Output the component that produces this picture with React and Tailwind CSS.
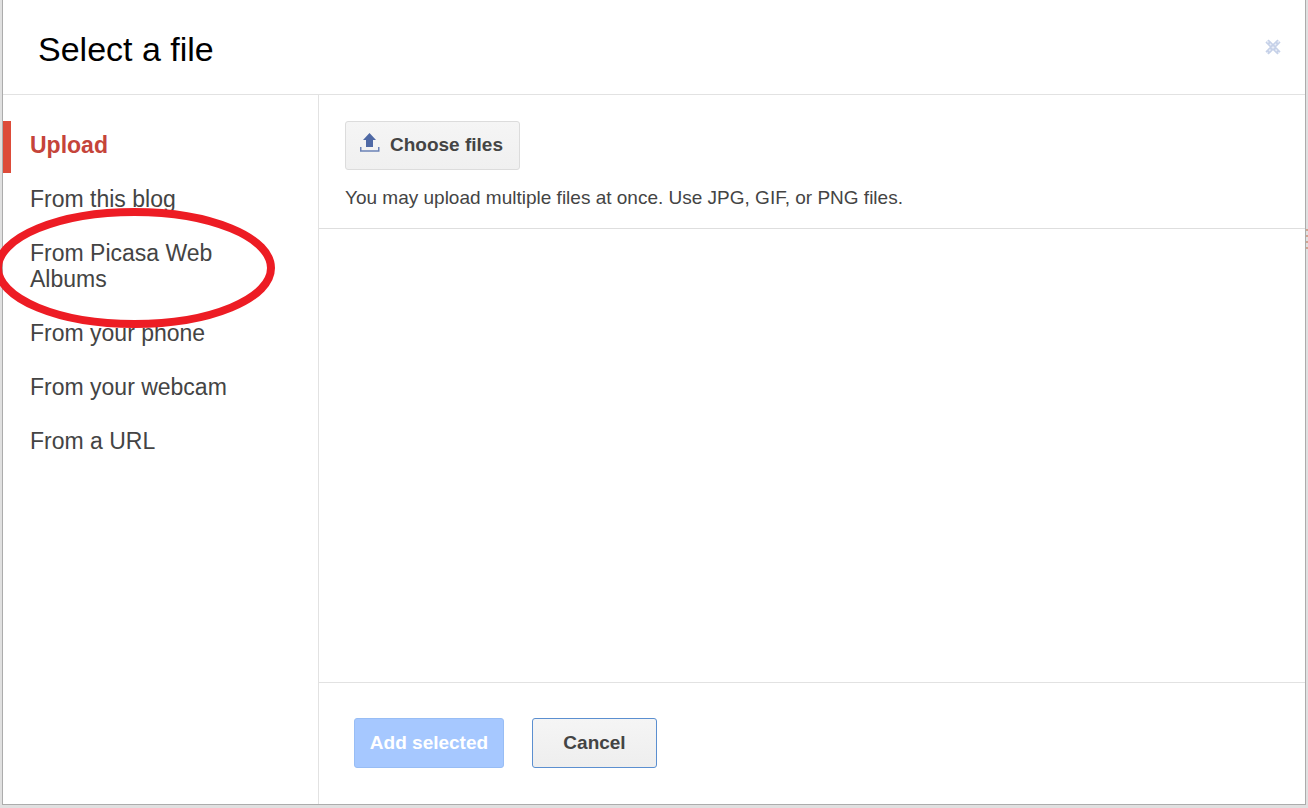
import { useState } from "react";

const SOURCES = [
  "Upload",
  "From this blog",
  "From Picasa Web Albums",
  "From your phone",
  "From your webcam",
  "From a URL",
];

const UploadIcon = () => (
  <svg className="mb-1.5" width="20" height="19" viewBox="0 0 20 19" aria-hidden="true">
    <path d="M9.500 0 L16 7 H13 V14 H6 V7 H3 Z" fill="#4f69a5" />
    <path d="M0.750 14 V18 H18.750 V14" fill="none" stroke="#6b82b6" strokeWidth="1.500" />
  </svg>
);

const CloseIcon = () => (
  <svg width="16" height="16" viewBox="0 0 16 16" aria-hidden="true">
    <path d="M2 2 L14 14 M14 2 L2 14" stroke="#c6d1e8" strokeWidth="4.500" />
    <path d="M2 2 L14 14 M14 2 L2 14" stroke="#e9eef8" strokeWidth="1.500" strokeDasharray="2 2" />
  </svg>
);

const Sidebar = ({ active, onSelect }) => (
  <nav className="relative w-[316px] shrink-0 border-r border-[#e2e2e2] pt-[26px]">
    <ul className="flex flex-col gap-0.5">
      {SOURCES.map((source) => (
        <li key={source}>
          <button
            type="button"
            onClick={() => onSelect(source)}
            className={`w-full border-l-8 pb-[15px] pl-[19px] pr-20 pt-[11px] text-left text-[23px] leading-[26px] ${
              active === source
                ? "border-[#dd4b39] font-bold text-[#c5443a]"
                : "border-transparent text-[#444]"
            }`}
          >
            {source}
          </button>
        </li>
      ))}
    </ul>
    {/* hand-drawn highlight around the Picasa entry */}
    <svg
      className="pointer-events-none absolute -left-[9px] top-[113px]"
      width="281"
      height="120"
      viewBox="0 0 281 120"
      aria-hidden="true"
    >
      <ellipse cx="140.500" cy="60" rx="136.500" ry="56" fill="none" stroke="#ed1c24" strokeWidth="8" />
    </svg>
  </nav>
);

const App = () => {
  const [active, setActive] = useState("Upload");

  return (
    <div className="relative flex h-screen overflow-hidden bg-[#e0e0e0] px-0.5 pb-[3px] font-['Liberation_Sans',Arial,sans-serif]">
      <div
        role="dialog"
        aria-labelledby="dialog-title"
        className="flex flex-1 flex-col border-x border-b border-[#acacac] bg-white"
      >
        <header className="flex h-[95px] shrink-0 items-center justify-between border-b border-[#e2e2e2] pl-[35px] pr-6">
          <h1 id="dialog-title" className="pt-1 text-[34px] leading-10 text-black">
            Select a file
          </h1>
          <button type="button" aria-label="Close">
            <CloseIcon />
          </button>
        </header>

        <div className="flex flex-1">
          <Sidebar active={active} onSelect={setActive} />

          <main className="flex flex-1 flex-col">
            <section className="border-b border-[#dedede] px-[26px] pb-[18px] pt-[26px]">
              <button
                type="button"
                className="flex h-[49px] items-center gap-2.5 rounded-[3px] border border-[#dcdcdc] bg-linear-to-b from-[#f5f5f5] to-[#f0f0f0] pl-3.5 pr-4 text-[19px] font-bold text-[#444]"
              >
                <UploadIcon />
                Choose files
              </button>
              <p className="mt-4 text-[19px] leading-6 text-[#444]">
                You may upload multiple files at once. Use JPG, GIF, or PNG files.
              </p>
            </section>

            <div className="flex-1" />

            <footer className="flex gap-7 border-t border-[#e2e2e2] px-[35px] pb-9 pt-[35px]">
              <button
                type="button"
                className="h-[50px] w-[150px] rounded-[3px] border border-[#98bdf5] bg-[#a6c8ff] text-[19px] font-bold text-white"
              >
                Add selected
              </button>
              <button
                type="button"
                className="h-[50px] w-[125px] rounded-[3px] border border-[#5b8fd0] bg-linear-to-b from-[#f5f5f5] to-[#eee] text-[19px] font-bold text-[#444]"
              >
                Cancel
              </button>
            </footer>
          </main>
        </div>
      </div>

      {/* sliver of the page behind the dialog */}
      <div className="absolute right-0 top-[229px] flex flex-col gap-1">
        <span className="h-0.5 w-0.5 bg-[#cfa593]" />
        <span className="h-0.5 w-0.5 bg-[#cfa593]" />
        <span className="h-0.5 w-0.5 bg-[#cfa593]" />
        <span className="h-0.5 w-0.5 bg-[#cfa593]" />
      </div>
    </div>
  );
};

export default App;
